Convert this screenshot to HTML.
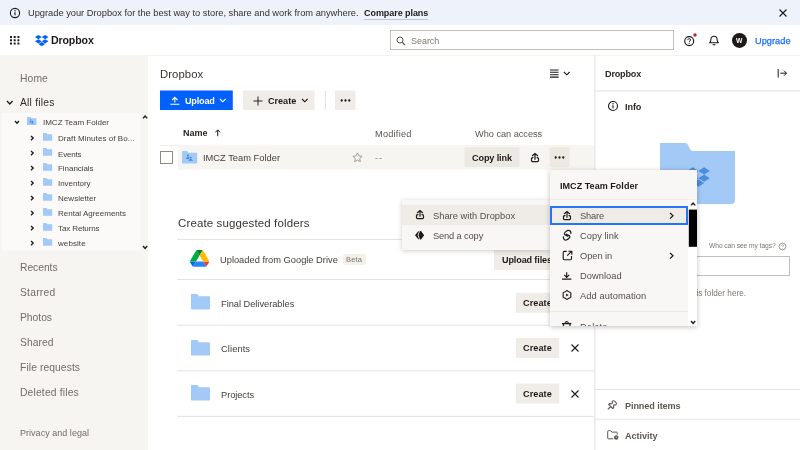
<!DOCTYPE html>
<html><head><meta charset="utf-8">
<style>
*{box-sizing:border-box;margin:0;padding:0}
html,body{width:800px;height:450px;overflow:hidden;background:#fff}
body{font-family:"Liberation Sans",sans-serif;color:#1e1919;position:relative}
.a{position:absolute;white-space:nowrap}
.t{position:absolute;white-space:nowrap;line-height:1;will-change:transform}
svg{position:absolute;overflow:visible}
.b{font-weight:bold}
.hl{position:absolute;height:1px;background:#e6e3de}
</style></head><body>

<div class="a" style="left:0;top:0;width:800px;height:25px;background:#eef2fb"></div>
<svg style="left:8.9px;top:6.5px" width="12" height="12" viewBox="0 0 12 12"><circle cx="6" cy="6" r="4.6" fill="none" stroke="#1e1919" stroke-width="1.1"/><rect x="5.45" y="5.2" width="1.1" height="3.1" fill="#1e1919"/><circle cx="6" cy="3.8" r="0.7" fill="#1e1919"/></svg>
<div class="t" style="left:27.5px;top:9px;font-size:9.3px;letter-spacing:-0.010px;color:#35302c">Upgrade your Dropbox for the best way to store, share and work from anywhere.</div>
<div class="t b" style="left:363.7px;top:9px;font-size:9px;letter-spacing:-0.061px;">Compare plans</div>
<div class="a" style="left:363.500px;top:18.500px;width:64.500px;height:1px;background:#c3c6d0"></div>
<svg style="left:777.7px;top:7.699999999999999px" width="10" height="10" viewBox="0 0 10 10"><path d="M1.5 1.5L8.5 8.5M8.5 1.5L1.5 8.5" stroke="#1e1919" stroke-width="1.1" fill="none"/></svg>
<svg style="left:10.200px;top:36.200px" width="10" height="9" viewBox="0 0 10 9" fill="#1e1919"><rect x="0.0" y="0.0" width="2" height="2" rx="0.3"/><rect x="3.7" y="0.0" width="2" height="2" rx="0.3"/><rect x="7.4" y="0.0" width="2" height="2" rx="0.3"/><rect x="0.0" y="3.3" width="2" height="2" rx="0.3"/><rect x="3.7" y="3.3" width="2" height="2" rx="0.3"/><rect x="7.4" y="3.3" width="2" height="2" rx="0.3"/><rect x="0.0" y="6.6" width="2" height="2" rx="0.3"/><rect x="3.7" y="6.6" width="2" height="2" rx="0.3"/><rect x="7.4" y="6.6" width="2" height="2" rx="0.3"/></svg>
<svg style="left:34.700px;top:34.600px" width="13.500" height="11.200" viewBox="0 0 26 22" preserveAspectRatio="none" fill="#0061fe"><path d="M6.500 0L0 4.100l6.500 4.100L13 4.100zM19.500 0L13 4.100l6.500 4.100L26 4.100zM0 12.400l6.500 4.100 6.500-4.100-6.500-4.200zM19.500 8.200L13 12.400l6.500 4.100 6.500-4.100zM6.500 17.900l6.500 4.100 6.500-4.100-6.500-4.100z"/></svg>
<div class="t b" style="left:50.9px;top:35px;font-size:10.6px;letter-spacing:-0.127px;">Dropbox</div>
<div class="a" style="left:390px;top:30px;width:284px;height:20px;border:1px solid #c1bdb7;background:#fff"></div>
<svg style="left:396px;top:35.500px" width="10" height="10" viewBox="0 0 10 10"><circle cx="4" cy="4" r="3" fill="none" stroke="#5a544e" stroke-width="1"/><path d="M6.200 6.200L9 9" stroke="#5a544e" stroke-width="1.100"/></svg>
<div class="t" style="left:410.7px;top:37px;font-size:9px;letter-spacing:-0.046px;color:#7d7770">Search</div>
<svg style="left:683px;top:32.500px" width="15" height="14" viewBox="0 0 15 14"><circle cx="6.200" cy="8.100" r="4.500" fill="none" stroke="#1e1919" stroke-width="1.100"/><path d="M4.800 7.100c0-.9.600-1.500 1.400-1.500s1.400.5 1.400 1.300c0 1-1.400 1-1.400 2" fill="none" stroke="#1e1919" stroke-width="1"/><circle cx="6.200" cy="10.300" r="0.650" fill="#1e1919"/><circle cx="12" cy="2" r="1.700" fill="#c1233c"/></svg>
<svg style="left:708px;top:35px" width="12" height="12" viewBox="0 0 12 12"><path d="M1.600 7.800c1.100-.8 1.300-1.700 1.300-3.200 0-2 1.300-3.300 3.100-3.300s3.100 1.300 3.100 3.300c0 1.500.2 2.400 1.300 3.200z" fill="none" stroke="#1e1919" stroke-width="1.100" stroke-linejoin="round"/><path d="M4.700 9.700h2.600" stroke="#1e1919" stroke-width="1.100"/></svg>
<div class="a" style="left:731.800px;top:33.200px;width:14.800px;height:14.800px;border-radius:50%;background:#1e1919"></div>
<div class="t b" style="left:735.9px;top:38px;font-size:6.8px;color:#fff">W</div>
<div class="t" style="left:754.5px;top:37px;font-size:9.2px;letter-spacing:0.042px;color:#1a6dfe;-webkit-text-stroke:0.250px #1a6dfe">Upgrade</div>
<div class="hl" style="left:148px;top:55px;width:652px;background:#f5f3f0"></div>
<div class="a" style="left:0;top:55px;width:148px;height:395px;background:#f7f5f2"></div>
<div class="t" style="left:20.4px;top:74px;font-size:10.3px;letter-spacing:0.110px;color:#736c64">Home</div>
<div class="t" style="left:20.4px;top:98px;font-size:10.3px;letter-spacing:0.222px;color:#332e2a">All files</div>
<svg style="left:6.20px;top:99.80px" width="7.6" height="5" viewBox="0 0 7.6 5"><path d="M1 1L3.8 4 6.6 1" fill="none" stroke="#1e1919" stroke-width="1.3"/></svg>
<svg style="left:2px;top:113px" width="139" height="138" viewBox="0 0 139 138"><rect x="0.00" y="0.00" width="138.4" height="137.6" fill="#fbfaf8" /></svg>
<svg style="left:14.20px;top:120.45px" width="6" height="4.3" viewBox="0 0 6 4.3"><path d="M1 1L3.0 3.3 5 1" fill="none" stroke="#1e1919" stroke-width="1.3"/></svg>
<svg style="left:27.2px;top:117.3px" width="9.5" height="8" viewBox="0 0 10 8" preserveAspectRatio="none"><path d="M0 0h3.700l1 1.200H10V8H0z" fill="#a3c9f6"/><g fill="#3f86de"><circle cx="3.900" cy="2.900" r="0.700"/><path d="M2.500 5.400L3.900 3.400 4.900 4.700 4.400 5.400z"/><circle cx="5.700" cy="4.400" r="0.700"/><path d="M4.100 6.600L5.700 4.700 7.300 6.600z"/></g></svg>
<div class="t" style="left:43px;top:119px;font-size:8px;letter-spacing:-0.006px;color:#45403b">IMCZ Team Folder</div>
<svg style="left:30.30px;top:134.60px" width="4.2" height="6.2" viewBox="0 0 4.2 6.2"><path d="M1 1L3.2 3.1 1 5.2" fill="none" stroke="#1e1919" stroke-width="1.3"/></svg>
<svg style="left:42.8px;top:133.0px" width="9.2" height="7.8" viewBox="0 0 10 8" preserveAspectRatio="none"><path d="M0 0h3.700l1 1.200H10V8H0z" fill="#a3c9f6"/></svg>
<div class="t" style="left:58.4px;top:135px;font-size:8px;letter-spacing:0.069px;color:#45403b">Draft Minutes of Bo...</div>
<svg style="left:30.30px;top:149.90px" width="4.2" height="6.2" viewBox="0 0 4.2 6.2"><path d="M1 1L3.2 3.1 1 5.2" fill="none" stroke="#1e1919" stroke-width="1.3"/></svg>
<svg style="left:42.8px;top:148.29999999999998px" width="9.2" height="7.8" viewBox="0 0 10 8" preserveAspectRatio="none"><path d="M0 0h3.700l1 1.200H10V8H0z" fill="#a3c9f6"/></svg>
<div class="t" style="left:58.4px;top:151px;font-size:8px;letter-spacing:-0.174px;color:#45403b">Events</div>
<svg style="left:30.30px;top:164.70px" width="4.2" height="6.2" viewBox="0 0 4.2 6.2"><path d="M1 1L3.2 3.1 1 5.2" fill="none" stroke="#1e1919" stroke-width="1.3"/></svg>
<svg style="left:42.8px;top:163.1px" width="9.2" height="7.8" viewBox="0 0 10 8" preserveAspectRatio="none"><path d="M0 0h3.700l1 1.200H10V8H0z" fill="#a3c9f6"/></svg>
<div class="t" style="left:58.4px;top:165px;font-size:8px;letter-spacing:-0.046px;color:#45403b">Financials</div>
<svg style="left:30.30px;top:179.70px" width="4.2" height="6.2" viewBox="0 0 4.2 6.2"><path d="M1 1L3.2 3.1 1 5.2" fill="none" stroke="#1e1919" stroke-width="1.3"/></svg>
<svg style="left:42.8px;top:178.1px" width="9.2" height="7.8" viewBox="0 0 10 8" preserveAspectRatio="none"><path d="M0 0h3.700l1 1.200H10V8H0z" fill="#a3c9f6"/></svg>
<div class="t" style="left:58.4px;top:180px;font-size:8px;letter-spacing:-0.038px;color:#45403b">Inventory</div>
<svg style="left:30.30px;top:194.70px" width="4.2" height="6.2" viewBox="0 0 4.2 6.2"><path d="M1 1L3.2 3.1 1 5.2" fill="none" stroke="#1e1919" stroke-width="1.3"/></svg>
<svg style="left:42.8px;top:193.1px" width="9.2" height="7.8" viewBox="0 0 10 8" preserveAspectRatio="none"><path d="M0 0h3.700l1 1.200H10V8H0z" fill="#a3c9f6"/></svg>
<div class="t" style="left:58.4px;top:195px;font-size:8px;letter-spacing:0.045px;color:#45403b">Newsletter</div>
<svg style="left:30.30px;top:209.70px" width="4.2" height="6.2" viewBox="0 0 4.2 6.2"><path d="M1 1L3.2 3.1 1 5.2" fill="none" stroke="#1e1919" stroke-width="1.3"/></svg>
<svg style="left:42.8px;top:208.1px" width="9.2" height="7.8" viewBox="0 0 10 8" preserveAspectRatio="none"><path d="M0 0h3.700l1 1.200H10V8H0z" fill="#a3c9f6"/></svg>
<div class="t" style="left:58.4px;top:210px;font-size:8px;color:#45403b">Rental Agreements</div>
<svg style="left:30.30px;top:224.70px" width="4.2" height="6.2" viewBox="0 0 4.2 6.2"><path d="M1 1L3.2 3.1 1 5.2" fill="none" stroke="#1e1919" stroke-width="1.3"/></svg>
<svg style="left:42.8px;top:223.1px" width="9.2" height="7.8" viewBox="0 0 10 8" preserveAspectRatio="none"><path d="M0 0h3.700l1 1.200H10V8H0z" fill="#a3c9f6"/></svg>
<div class="t" style="left:58.4px;top:225px;font-size:8px;letter-spacing:-0.109px;color:#45403b">Tax Returns</div>
<svg style="left:30.30px;top:239.60px" width="4.2" height="6.2" viewBox="0 0 4.2 6.2"><path d="M1 1L3.2 3.1 1 5.2" fill="none" stroke="#1e1919" stroke-width="1.3"/></svg>
<svg style="left:42.8px;top:238.0px" width="9.2" height="7.8" viewBox="0 0 10 8" preserveAspectRatio="none"><path d="M0 0h3.700l1 1.200H10V8H0z" fill="#a3c9f6"/></svg>
<div class="t" style="left:58.4px;top:240px;font-size:8px;letter-spacing:0.079px;color:#45403b">website</div>
<svg style="left:141.90px;top:114.60px" width="6.2" height="4.4" viewBox="0 0 6.2 4.4"><path d="M1 3.4L3.1 1 5.2 3.4" fill="none" stroke="#1e1919" stroke-width="1.4"/></svg>
<svg style="left:141.90px;top:244.60px" width="6.2" height="4.4" viewBox="0 0 6.2 4.4"><path d="M1 1L3.1 3.4 5.2 1" fill="none" stroke="#1e1919" stroke-width="1.4"/></svg>
<div class="t" style="left:20.4px;top:263px;font-size:10.3px;letter-spacing:-0.030px;color:#736c64">Recents</div>
<div class="t" style="left:20.4px;top:288px;font-size:10.3px;letter-spacing:0.236px;color:#736c64">Starred</div>
<div class="t" style="left:20.4px;top:313px;font-size:10.3px;letter-spacing:-0.013px;color:#736c64">Photos</div>
<div class="t" style="left:20.4px;top:338px;font-size:10.3px;letter-spacing:0.036px;color:#736c64">Shared</div>
<div class="t" style="left:20.4px;top:363px;font-size:10.3px;letter-spacing:0.087px;color:#736c64">File requests</div>
<div class="t" style="left:20.4px;top:388px;font-size:10.3px;letter-spacing:0.169px;color:#736c64">Deleted files</div>
<div class="t" style="left:20.4px;top:429px;font-size:9px;letter-spacing:0.028px;color:#736c64">Privacy and legal</div>
<div class="t" style="left:160.4px;top:69px;font-size:11.3px;letter-spacing:0.083px;color:#3a3531">Dropbox</div>
<svg style="left:550.100px;top:68.500px" width="9" height="9" viewBox="0 0 9 9"><path d="M0 0.900h8.600M0 3.300h8.600M0 5.700h8.600M0 8.100h8.600" stroke="#1e1919" stroke-width="1.050"/></svg>
<svg style="left:563.20px;top:71.20px" width="7.6" height="4.8" viewBox="0 0 7.6 4.8"><path d="M1 1L3.8 3.8 6.6 1" fill="none" stroke="#1e1919" stroke-width="1.15"/></svg>
<svg style="left:160px;top:90px" width="73" height="20" viewBox="0 0 73 20"><rect x="0.00" y="0.50" width="72.8" height="19.5" fill="#0061fe" /></svg>
<svg style="left:170px;top:96px" width="10" height="9" viewBox="0 0 10 9"><path d="M4.800 6.600V1.400M2.100 4L4.800 1.300 7.500 4M0.300 8.300h9.100" fill="none" stroke="#fff" stroke-width="1.100"/></svg>
<div class="t b" style="left:185.4px;top:97px;font-size:9.1px;letter-spacing:-0.206px;color:#fff">Upload</div>
<svg style="left:219.20px;top:98.40px" width="7.6" height="4.8" viewBox="0 0 7.6 4.8"><path d="M1 1L3.8 3.8 6.6 1" fill="none" stroke="#fff" stroke-width="1.15"/></svg>
<svg style="left:243px;top:90px" width="72" height="20" viewBox="0 0 72 20"><rect x="0.00" y="0.50" width="71.5" height="19.5" fill="#f0ede8" /></svg>
<svg style="left:252.500px;top:95.500px" width="10" height="10" viewBox="0 0 10 10"><path d="M5 0.500v9M0.500 5h9" stroke="#1e1919" stroke-width="0.950"/></svg>
<div class="t b" style="left:268.4px;top:97px;font-size:9.1px;letter-spacing:-0.023px;">Create</div>
<svg style="left:300.50px;top:98.40px" width="7.6" height="4.8" viewBox="0 0 7.6 4.8"><path d="M1 1L3.8 3.8 6.6 1" fill="none" stroke="#1e1919" stroke-width="1.15"/></svg>
<div class="a" style="left:324.500px;top:91px;width:1px;height:19px;background:#e6e3de"></div>
<svg style="left:335px;top:90px" width="21" height="20" viewBox="0 0 21 20"><rect x="0.00" y="0.50" width="20.5" height="19.5" fill="#f0ede8" /></svg>
<svg style="left:339.7px;top:98.8px" width="11" height="3" viewBox="0 0 11 3" fill="#1e1919"><circle cx="1.7" cy="1.5" r="1.15"/><circle cx="5.5" cy="1.5" r="1.15"/><circle cx="9.3" cy="1.5" r="1.15"/></svg>
<div class="t b" style="left:183px;top:129px;font-size:9px;letter-spacing:0.028px;color:#2b2623">Name</div>
<svg style="left:214px;top:129px" width="8" height="8" viewBox="0 0 8 8"><path d="M3.700 7.200V1.200M1.300 3.300L3.700 0.900 6.100 3.300" fill="none" stroke="#1e1919" stroke-width="1"/></svg>
<div class="t" style="left:375.1px;top:130px;font-size:9.2px;letter-spacing:0.238px;color:#5a544e">Modified</div>
<div class="t" style="left:474.9px;top:130px;font-size:9.2px;letter-spacing:-0.016px;color:#5a544e">Who can access</div>
<svg style="left:178px;top:145px" width="417" height="25" viewBox="0 0 417 25"><rect x="0.00" y="0.00" width="416.4" height="24.7" fill="#f7f5f2" /></svg>
<div class="hl" style="left:160px;top:145px;width:18px;background:#f0eeea"></div>
<div class="a" style="left:160.200px;top:151.300px;width:12.400px;height:12.400px;border:1px solid #8f8982;background:#fff"></div>
<svg style="left:182.300px;top:150.700px" width="15.200" height="12.400" viewBox="0 0 15 12.800" preserveAspectRatio="none"><path d="M0 0.500q0-.5.500-.5h4.700l1.200 1.800H14.500q.5 0 .5.500V12.300q0 .5-.5.500H.5q-.5 0-.5-.5z" fill="#a3c9f6"/><g fill="#3f86de"><circle cx="5.900" cy="4.600" r="0.950"/><path d="M3.800 8.300L5.900 5.300 7.300 7.300 6.600 8.300z"/><circle cx="8.500" cy="6.800" r="0.950"/><path d="M6.200 10.200L8.500 7.400 10.900 10.200z"/></g></svg>
<div class="t" style="left:202.6px;top:154px;font-size:9.3px;letter-spacing:0.013px;color:#45403b">IMCZ Team Folder</div>
<svg style="left:352px;top:152.300px" width="11" height="11" viewBox="0 0 11 11"><path d="M5.500 0.900l1.400 3 3.200.4-2.400 2.200.7 3.200-2.900-1.600-2.900 1.600.7-3.200L0.900 4.300l3.200-.4z" fill="none" stroke="#8f8982" stroke-width="0.800" stroke-linejoin="round"/></svg>
<div class="t" style="left:375px;top:154px;font-size:9.3px;letter-spacing:0.797px;color:#8f8982">--</div>
<svg style="left:464px;top:147px" width="56" height="20" viewBox="0 0 56 20"><rect x="0.50" y="0.30" width="55" height="19.7" fill="#ece9e3" /></svg>
<div class="t b" style="left:472.3px;top:154px;font-size:9.1px;letter-spacing:-0.117px;">Copy link</div>
<svg style="left:529.50px;top:151.90px" width="10" height="11" viewBox="0 0 10 11"><path d="M5 7.800V1.800M2.100 4L5 1.500 7.900 4M3.400 5.700H2.500Q1.500 5.700 1.500 6.700V8.600Q1.500 9.600 2.500 9.600H7.500Q8.500 9.600 8.500 8.600V6.700Q8.500 5.700 7.500 5.700H6.600" fill="none" stroke="#1e1919" stroke-width="1.2"/></svg>
<svg style="left:549px;top:147px" width="21" height="20" viewBox="0 0 21 20"><rect x="0.60" y="0.30" width="19.9" height="19.7" fill="#ece9e3" /></svg>
<svg style="left:554.2px;top:155.7px" width="11" height="3" viewBox="0 0 11 3" fill="#1e1919"><circle cx="1.7" cy="1.5" r="1.15"/><circle cx="5.5" cy="1.5" r="1.15"/><circle cx="9.3" cy="1.5" r="1.15"/></svg>
<div class="t" style="left:177.8px;top:218px;font-size:11.5px;letter-spacing:0.126px;color:#3a3531">Create suggested folders</div>
<svg style="left:177px;top:238px" width="417" height="2" viewBox="0 0 417 2"><rect x="0.00" y="0.90" width="417" height="1" fill="#e6e3de" /></svg>
<svg style="left:177px;top:279px" width="417" height="1" viewBox="0 0 417 1"><rect x="0.00" y="0.00" width="417" height="1" fill="#e6e3de" /></svg>
<svg style="left:177px;top:324px" width="417" height="2" viewBox="0 0 417 2"><rect x="0.00" y="0.70" width="417" height="1" fill="#e6e3de" /></svg>
<svg style="left:177px;top:370px" width="417" height="2" viewBox="0 0 417 2"><rect x="0.00" y="0.30" width="417" height="1" fill="#e6e3de" /></svg>
<svg style="left:177px;top:415px" width="417" height="2" viewBox="0 0 417 2"><rect x="0.00" y="0.90" width="417" height="1" fill="#e6e3de" /></svg>
<svg style="left:189.600px;top:250.100px" width="19.200" height="16.800" viewBox="0 0 87.3 78" preserveAspectRatio="none"><path d="m6.600 66.850 3.850 6.650c.8 1.400 1.950 2.500 3.300 3.300l13.750-23.800h-27.500c0 1.550.4 3.100 1.200 4.500z" fill="#0066da"/><path d="m43.650 25-13.750-23.800c-1.350.8-2.500 1.900-3.300 3.300l-25.400 44a9.060 9.060 0 0 0 -1.200 4.500h27.500z" fill="#00ac47"/><path d="m73.550 76.800c1.350-.8 2.500-1.900 3.300-3.300l1.600-2.750 7.650-13.250c.8-1.400 1.200-2.950 1.200-4.500h-27.502l5.852 11.500z" fill="#ea4335"/><path d="m43.650 25 13.750-23.800c-1.350-.8-2.900-1.200-4.500-1.200h-18.500c-1.600 0-3.150.45-4.500 1.200z" fill="#00832d"/><path d="m59.800 53h-32.300l-13.750 23.800c1.350.8 2.900 1.200 4.500 1.200h50.800c1.600 0 3.150-.45 4.500-1.200z" fill="#2684fc"/><path d="m73.400 26.500-12.700-22c-.8-1.400-1.950-2.500-3.300-3.300l-13.750 23.800 16.150 28h27.450c0-1.550-.4-3.100-1.200-4.500z" fill="#ffba00"/></svg>
<div class="t" style="left:219.5px;top:256px;font-size:9.3px;color:#45403b">Uploaded from Google Drive</div>
<div class="a" style="left:342.500px;top:254.300px;width:23px;height:10.500px;background:#f3efe9;border-radius:3px"></div>
<div class="t" style="left:346px;top:256px;font-size:7.5px;letter-spacing:0.188px;color:#7d7770">Beta</div>
<svg style="left:494px;top:250px" width="66" height="20" viewBox="0 0 66 20"><rect x="0.00" y="0.00" width="66" height="20" fill="#f0ede8" /></svg>
<div class="t b" style="left:502px;top:256px;font-size:9.1px;letter-spacing:-0.141px;">Upload files</div>
<svg style="left:190.7px;top:294px" width="19" height="15.500" viewBox="0 0 19 15.500"><path d="M0 0.800q0-.8.800-.8h5.700l1.400 2.200H18.200q.8 0 .8.800V14.700q0 .8-.8.800H.8q-.8 0-.8-.8z" fill="#a3c9f6"/></svg>
<div class="t" style="left:220.9px;top:300px;font-size:9.3px;letter-spacing:-0.035px;color:#45403b">Final Deliverables</div>
<svg style="left:516px;top:292px" width="44" height="21" viewBox="0 0 44 21"><rect x="0.00" y="0.80" width="43.2" height="20" fill="#f0ede8" /></svg>
<div class="t b" style="left:523.2px;top:299px;font-size:9.1px;letter-spacing:0.098px;">Create</div>
<svg style="left:190.7px;top:339.7px" width="19" height="15.500" viewBox="0 0 19 15.500"><path d="M0 0.800q0-.8.800-.8h5.700l1.400 2.200H18.200q.8 0 .8.800V14.700q0 .8-.8.800H.8q-.8 0-.8-.8z" fill="#a3c9f6"/></svg>
<div class="t" style="left:220.9px;top:345px;font-size:9.3px;letter-spacing:0.096px;color:#45403b">Clients</div>
<svg style="left:516px;top:338px" width="44" height="20" viewBox="0 0 44 20"><rect x="0.00" y="0.00" width="43.2" height="20" fill="#f0ede8" /></svg>
<div class="t b" style="left:523.2px;top:344px;font-size:9.1px;letter-spacing:0.098px;">Create</div>
<svg style="left:569.8px;top:343.1px" width="10" height="10" viewBox="0 0 10 10"><path d="M1.5 1.5L8.5 8.5M8.5 1.5L1.5 8.5" stroke="#1e1919" stroke-width="1.1" fill="none"/></svg>
<svg style="left:190.7px;top:385.1px" width="19" height="15.500" viewBox="0 0 19 15.500"><path d="M0 0.800q0-.8.800-.8h5.700l1.400 2.200H18.200q.8 0 .8.800V14.700q0 .8-.8.800H.8q-.8 0-.8-.8z" fill="#a3c9f6"/></svg>
<div class="t" style="left:220.9px;top:391px;font-size:9.3px;letter-spacing:-0.071px;color:#45403b">Projects</div>
<svg style="left:516px;top:383px" width="44" height="21" viewBox="0 0 44 21"><rect x="0.00" y="0.60" width="43.2" height="20" fill="#f0ede8" /></svg>
<div class="t b" style="left:523.2px;top:390px;font-size:9.1px;letter-spacing:0.098px;">Create</div>
<svg style="left:569.8px;top:388.5px" width="10" height="10" viewBox="0 0 10 10"><path d="M1.5 1.5L8.5 8.5M8.5 1.5L1.5 8.5" stroke="#1e1919" stroke-width="1.1" fill="none"/></svg>
<svg style="left:594px;top:55px" width="2" height="395" viewBox="0 0 2 395"><rect x="0.30" y="0.00" width="1.1" height="395" fill="#e6e3de" /></svg>
<div class="t b" style="left:605.3px;top:70px;font-size:9.1px;letter-spacing:-0.182px;color:#2b2623">Dropbox</div>
<svg style="left:777px;top:68px" width="11" height="10" viewBox="0 0 11 10"><path d="M1.200 1v8.500M3.300 5.200h6.200M7 2.700L9.500 5.200 7 7.700" fill="none" stroke="#1e1919" stroke-width="1"/></svg>
<svg style="left:595px;top:90px" width="205" height="2" viewBox="0 0 205 2"><rect x="0.00" y="0.30" width="205" height="1.4" fill="#ebe8e4" /></svg>
<svg style="left:606.6px;top:100.3px" width="12" height="12" viewBox="0 0 12 12"><circle cx="6" cy="6" r="4.5" fill="none" stroke="#1e1919" stroke-width="1.1"/><rect x="5.45" y="5.2" width="1.1" height="3.1" fill="#1e1919"/><circle cx="6" cy="3.8" r="0.7" fill="#1e1919"/></svg>
<div class="t b" style="left:625.2px;top:103px;font-size:9.1px;letter-spacing:-0.091px;color:#2b2623">Info</div>
<svg style="left:660px;top:143.200px" width="75" height="61" viewBox="0 0 75 61"><path d="M0 0H25Q27.300 0 28.300 2.300L29.600 5.600Q30.600 8 33 8H75V57Q75 61 71 61H0z" fill="#a3c9f6"/><g fill="#4a8ee0" transform="translate(27,24.300) scale(0.880)"><path d="M6.500 0L0 4.100l6.500 4.100L13 4.100zM19.500 0L13 4.100l6.500 4.100L26 4.100zM0 12.400l6.500 4.100 6.500-4.100-6.500-4.200zM19.500 8.200L13 12.400l6.500 4.100 6.500-4.100zM6.500 17.900l6.500 4.100 6.500-4.100-6.500-4.100z"/></g></svg>
<div class="t" style="left:708.6px;top:243px;font-size:6.7px;letter-spacing:-0.070px;color:#7d7770">Who can see my tags?</div>
<svg style="left:778px;top:242.200px" width="9" height="9" viewBox="0 0 9 9"><circle cx="4.500" cy="4.500" r="3.400" fill="none" stroke="#7d7770" stroke-width="0.750"/><path d="M3.500 3.800c0-.6.400-1 1-1s1 .3 1 .9c0 .7-1 .7-1 1.400" fill="none" stroke="#7d7770" stroke-width="0.650"/><circle cx="4.500" cy="6.300" r="0.400" fill="#7d7770"/></svg>
<div class="a" style="left:612px;top:256.200px;width:178px;height:19.400px;border:1px solid #c1bdb7;background:#fff"></div>
<div class="t" style="left:662px;top:290px;font-size:8.2px;color:#7d7770;left:auto;right:53.700px">Describe this folder here.</div>
<svg style="left:595px;top:389px" width="205" height="1" viewBox="0 0 205 1"><rect x="0.00" y="0.00" width="205" height="1" fill="#e6e3de" /></svg>
<svg style="left:595px;top:418px" width="205" height="2" viewBox="0 0 205 2"><rect x="0.00" y="0.70" width="205" height="1" fill="#e6e3de" /></svg>
<svg style="left:607.400px;top:399.500px" width="10" height="10" viewBox="0 0 10 10"><path d="M5.600 1.200Q6.600 0.200 7.600 1.200L9 2.600Q10 3.600 9 4.600L8.300 5.100 7.300 4.700 6.500 5.500 6.700 7.500 5.700 8.500 1.700 4.500 2.700 3.500 4.700 3.700 5.500 2.900 5.100 1.900zM3.700 6.500L0.800 9.400" fill="none" stroke="#5e5851" stroke-width="1.100" stroke-linejoin="round"/></svg>
<div class="t b" style="left:625.3px;top:402px;font-size:9.1px;letter-spacing:-0.092px;color:#5e5851">Pinned items</div>
<svg style="left:606.800px;top:429.700px" width="12" height="10" viewBox="0 0 12 10"><path d="M6.200 8.800H1.400Q0.700 8.800 0.700 8.100V1.400Q0.700 0.700 1.400 0.700H3.700L4.900 2.100H9.500Q10.200 2.100 10.200 2.800V4.600" fill="none" stroke="#5e5851" stroke-width="1"/><circle cx="9.200" cy="7.500" r="2.200" fill="#5e5851"/><path d="M9.200 6.400V7.600H10.100" fill="none" stroke="#fff" stroke-width="0.500"/></svg>
<div class="t b" style="left:625.3px;top:432px;font-size:9.1px;letter-spacing:-0.051px;color:#5e5851">Activity</div>
<div class="a" style="left:402px;top:199.600px;width:148px;height:50px;background:#f9f7f5;box-shadow:0 1px 5px rgba(0,0,0,0.200)"></div>
<svg style="left:402px;top:204px" width="148" height="21" viewBox="0 0 148 21"><rect x="0.00" y="0.90" width="148" height="20.1" fill="#efece7" /></svg>
<svg style="left:414.50px;top:209.45px" width="10" height="11" viewBox="0 0 10 11"><path d="M5 7.800V1.800M2.100 4L5 1.500 7.900 4M3.400 5.700H2.500Q1.500 5.700 1.500 6.700V8.600Q1.500 9.600 2.500 9.600H7.500Q8.500 9.600 8.500 8.600V6.700Q8.500 5.700 7.500 5.700H6.600" fill="none" stroke="#1e1919" stroke-width="1.2"/></svg>
<div class="t" style="left:432.6px;top:212px;font-size:9.3px;letter-spacing:0.026px;color:#544e48">Share with Dropbox</div>
<svg style="left:415px;top:230.900px" width="9.200" height="8.500" viewBox="0 0 9.200 8.500" fill="#1e1919"><path d="M0 4.250L3.300 0.200H4.100L2.600 4.250 4.100 8.300H3.300zM4.900 0H6L9.200 4.250 6 8.500H4.900L3.500 4.250z"/></svg>
<div class="t" style="left:432.6px;top:232px;font-size:9.3px;letter-spacing:-0.139px;color:#544e48">Send a copy</div>
<div class="a" style="left:549.600px;top:169.700px;width:147.400px;height:156.100px;background:#f9f7f5;box-shadow:0 1px 5px rgba(0,0,0,0.250);overflow:hidden"></div>
<div class="a" style="left:549.600px;top:169.700px;width:147.400px;height:156.100px;overflow:hidden"><div style="position:absolute;left:-549.600px;top:-169.700px;width:800px;height:450px">
<div class="t b" style="left:559.8px;top:182px;font-size:9px;letter-spacing:0.044px;">IMCZ Team Folder</div>
<div class="hl" style="left:549.600px;top:199.200px;width:147.400px;background:#eeebe7"></div>
<svg style="left:688px;top:199px" width="9" height="128" viewBox="0 0 9 128"><rect x="0.20" y="0.70" width="8.8" height="127" fill="#fff" /></svg>
<svg style="left:688px;top:209px" width="9" height="38" viewBox="0 0 9 38"><rect x="0.80" y="0.60" width="8.2" height="37.2" fill="#000" /></svg>
<svg style="left:689.70px;top:202.10px" width="6.2" height="4.4" viewBox="0 0 6.2 4.4"><path d="M1 3.4L3.1 1 5.2 3.4" fill="none" stroke="#1e1919" stroke-width="1.4"/></svg>
<svg style="left:689.70px;top:320.10px" width="6.2" height="4.4" viewBox="0 0 6.2 4.4"><path d="M1 1L3.1 3.4 5.2 1" fill="none" stroke="#1e1919" stroke-width="1.4"/></svg>
<div class="a" style="left:549.600px;top:206px;width:138.600px;height:19px;background:#efece7;border:2px solid #2674fc"></div>
<svg style="left:561.90px;top:209.90px" width="10" height="11" viewBox="0 0 10 11"><path d="M5 7.800V1.800M2.100 4L5 1.500 7.900 4M3.400 5.700H2.500Q1.500 5.700 1.500 6.700V8.600Q1.500 9.600 2.500 9.600H7.500Q8.500 9.600 8.500 8.600V6.700Q8.500 5.700 7.500 5.700H6.600" fill="none" stroke="#1e1919" stroke-width="1.2"/></svg>
<div class="t" style="left:579.7px;top:212px;font-size:9.3px;letter-spacing:-0.178px;color:#544e48">Share</div>
<svg style="left:669.00px;top:212.20px" width="5" height="7.6" viewBox="0 0 5 7.6"><path d="M1 1L4 3.8 1 6.6" fill="none" stroke="#1e1919" stroke-width="1.2"/></svg>
<svg style="left:558px;top:226px" width="20" height="20" viewBox="0 0 20 20" fill="none" stroke="#1e1919" stroke-width="1.200" stroke-linecap="round"><path d="M12.900 7.500C13.200 5.500 11.500 3.900 9.900 4.400C8.300 4.900 6.100 6.700 6.400 8C6.700 9.200 8.600 9.200 9.900 10.200"/><path d="M5.400 10.900C5.100 12.900 6.700 14.500 8.300 14C9.900 13.500 12.100 11.700 11.900 10.400C11.600 9.200 9.700 9.200 8.400 8.200"/></svg>
<div class="t" style="left:579.7px;top:232px;font-size:9.3px;letter-spacing:0.044px;color:#544e48">Copy link</div>
<svg style="left:561.700px;top:250.300px" width="11" height="11" viewBox="0 0 11 11"><path d="M4.800 1.400H2.300Q1.200 1.400 1.200 2.500V8.600Q1.200 9.700 2.300 9.700H8.400Q9.500 9.700 9.500 8.600V6.100M5.200 5.700L9.700 1.200M6.300 1.200H9.800V4.700" fill="none" stroke="#1e1919" stroke-width="1.150"/></svg>
<div class="t" style="left:579.7px;top:252px;font-size:9.3px;letter-spacing:-0.060px;color:#544e48">Open in</div>
<svg style="left:669.00px;top:252.00px" width="5" height="7.6" viewBox="0 0 5 7.6"><path d="M1 1L4 3.8 1 6.6" fill="none" stroke="#1e1919" stroke-width="1.2"/></svg>
<svg style="left:562.300px;top:272px" width="9.400" height="8" viewBox="0 0 9.400 8"><path d="M4.700 0.300V5.200M2.200 2.900L4.700 5.400 7.200 2.900M0 7.200H9.400" fill="none" stroke="#1e1919" stroke-width="1.150"/></svg>
<div class="t" style="left:579.7px;top:272px;font-size:9.3px;letter-spacing:0.034px;color:#544e48">Download</div>
<svg style="left:562.100px;top:290.300px" width="10" height="10" viewBox="0 0 10 10"><path d="M4.11 1.04Q5.00 0.15 5.89 1.04Q6.78 1.93 7.99 2.25Q9.20 2.58 8.88 3.79Q8.55 5.00 8.88 6.21Q9.20 7.42 7.99 7.75Q6.78 8.07 5.89 8.96Q5.00 9.85 4.11 8.96Q3.23 8.07 2.01 7.75Q0.80 7.42 1.12 6.21Q1.45 5.00 1.12 3.79Q0.80 2.57 2.01 2.25Q3.22 1.93 4.11 1.04Z" fill="none" stroke="#1e1919" stroke-width="1.150" stroke-linejoin="round"/><path d="M4.100 3.400V6.600L6.700 5z" fill="#1e1919"/></svg>
<div class="t" style="left:579.7px;top:292px;font-size:9.3px;letter-spacing:0.090px;color:#544e48">Add automation</div>
<div class="hl" style="left:549.600px;top:310.800px;width:138.600px;background:#ebe8e4"></div>
<svg style="left:562.300px;top:320.600px" width="9.400" height="10" viewBox="0 0 9.400 10"><path d="M0 2.600H9.400M3 2.600Q3 0.600 4.700 0.600T6.400 2.600M1.300 2.600L2 9.500H7.400L8.100 2.600" fill="none" stroke="#1e1919" stroke-width="1.150"/></svg>
<div class="t" style="left:579.7px;top:323px;font-size:9.3px;letter-spacing:0.125px;color:#544e48">Delete</div>
</div></div>
</body></html>
